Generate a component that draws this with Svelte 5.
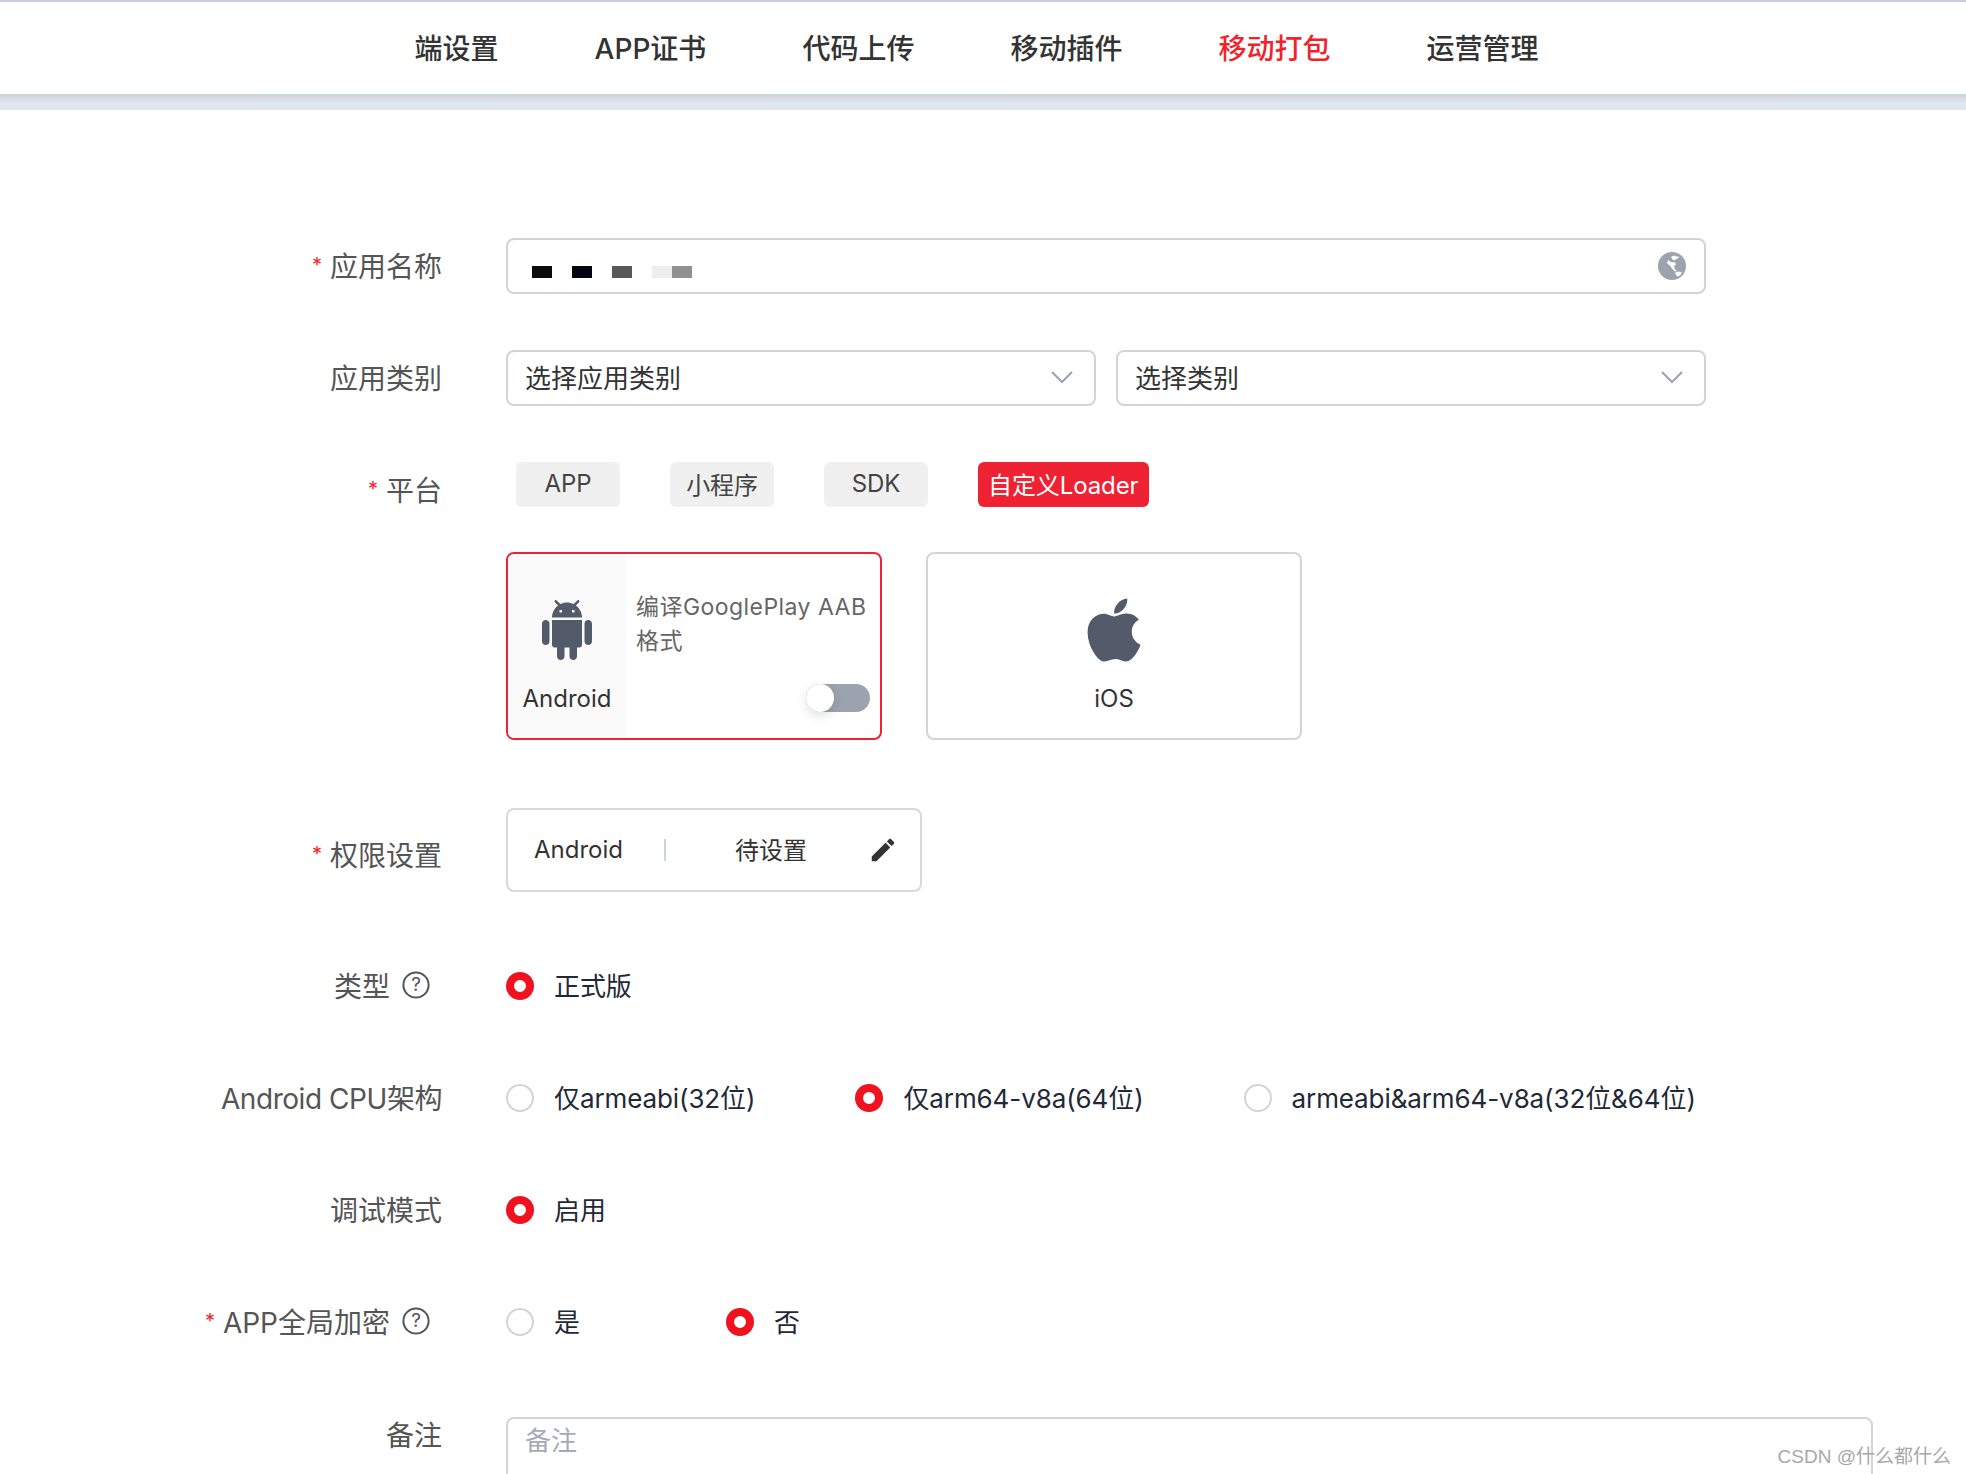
<script>
  const navItems = ['端设置', 'APP证书', '代码上传', '移动插件', '移动打包', '运营管理'];
  const activeNav = '移动打包';
  const platforms = ['APP', '小程序', 'SDK', '自定义Loader'];
  const activePlatform = '自定义Loader';
  const nameBlocks = ['#0b0b12', '#05050f', '#58585c', '#eeeeee', '#909090'];
  const cpuOptions = [
    { label: '仅armeabi(32位)', checked: false },
    { label: '仅arm64-v8a(64位)', checked: true },
    { label: 'armeabi&arm64-v8a(32位&64位)', checked: false }
  ];
</script>

{#snippet radio(label, checked)}
  <label class="radio">
    <span class="dot" class:checked></span>
    <span class="radio-text">{label}</span>
  </label>
{/snippet}

{#snippet help()}
  <svg class="help" viewBox="0 0 28 28" aria-hidden="true">
    <circle cx="14" cy="14" r="12.6" fill="none" stroke="#555" stroke-width="2" />
    <text x="14" y="20" text-anchor="middle">?</text>
  </svg>
{/snippet}

{#snippet chevron()}
  <svg class="chevron" viewBox="0 0 24 14" aria-hidden="true">
    <path d="M2 2l10 10L22 2" fill="none" stroke="#9ca3af" stroke-width="2" />
  </svg>
{/snippet}

<div class="page">
  <nav class="topnav">
    {#each navItems as item}
      <a class:active={item === activeNav} href="#top">{item}</a>
    {/each}
  </nav>
  <div class="shade"></div>

  <form class="form">
    <div class="row">
      <div class="label"><i>*</i>应用名称</div>
      <div class="field box">
        <div class="blocks">
          {#each nameBlocks as color}
            <span style:background={color}></span>
          {/each}
        </div>
        <svg class="globe" viewBox="0 0 28 28" aria-hidden="true">
          <circle cx="14" cy="14" r="14" fill="#9ca3af" />
          <path fill="#fff" d="M13 5l3-1.500 2 1 3 0-1 2-2 .5-1.500 1.500-2-1zM10 8l3 2 4 .5 1 2-2 2 1 3 2 1.500-2 .5-3-3-2-3-3-2zM17 20.500l4-1 3 1-2 3-3 1z" />
        </svg>
      </div>
    </div>

    <div class="row">
      <div class="label">应用类别</div>
      <div class="field selects">
        <div class="box select">选择应用类别{@render chevron()}</div>
        <div class="box select">选择类别{@render chevron()}</div>
      </div>
    </div>

    <div class="row platform">
      <div class="label"><i>*</i>平台</div>
      <div class="field">
        <div class="tabs">
          {#each platforms as p}
            <button type="button" class="tab" class:active={p === activePlatform}>{p}</button>
          {/each}
        </div>
        <div class="cards">
          <div class="card selected">
            <div class="side">
              <svg class="android" viewBox="0 0 24 24" aria-hidden="true">
                <path d="M6 18c0 .55.45 1 1 1h1v3.500c0 .83.67 1.500 1.500 1.500s1.500-.67 1.500-1.500V19h2v3.500c0 .83.67 1.500 1.500 1.500s1.500-.67 1.500-1.500V19h1c.55 0 1-.45 1-1V8H6v10zM3.500 8C2.670 8 2 8.670 2 9.500v7c0 .83.67 1.500 1.500 1.500S5 17.330 5 16.500v-7C5 8.670 4.330 8 3.500 8zm17 0c-.83 0-1.500.67-1.500 1.500v7c0 .83.67 1.500 1.500 1.500s1.500-.67 1.500-1.500v-7c0-.83-.67-1.500-1.500-1.500zm-4.970-5.840l1.300-1.300c.2-.2.2-.51 0-.71-.2-.2-.51-.2-.71 0l-1.480 1.480C13.850 1.230 12.950 1 12 1c-.96 0-1.860.23-2.660.63L7.850.15c-.2-.2-.51-.2-.71 0-.2.2-.2.51 0 .71l1.310 1.310C6.970 3.260 6 5.010 6 7h12c0-1.990-.97-3.750-2.470-4.840zM10 5H9V4h1v1zm5 0h-1V4h1v1z" />
              </svg>
              <span>Android</span>
            </div>
            <div class="detail">
              <p>编译GooglePlay AAB格式</p>
              <span class="switch"><span></span></span>
            </div>
          </div>
          <div class="card ios">
            <svg class="apple" viewBox="0 0 384 512" aria-hidden="true">
              <path d="M318.700 268.700c-.2-36.700 16.400-64.400 50-84.800-18.800-26.900-47.200-41.700-84.700-44.600-35.500-2.800-74.300 20.700-88.500 20.700-15 0-49.400-19.700-76.400-19.700C63.300 141.200 4 184.800 4 273.500q0 39.300 14.400 81.200c12.800 36.700 59 126.700 107.200 125.200 25.200-.6 43-17.900 75.800-17.900 31.800 0 48.300 17.900 76.400 17.900 48.600-.7 90.400-82.500 102.600-119.300-65.200-30.700-61.700-90-61.700-91.900zm-56.600-164.200c27.300-32.400 24.800-61.900 24-72.500-24.100 1.400-52 16.400-67.900 34.900-17.500 19.800-27.800 44.300-25.600 71.900 26.100 2 49.900-11.400 69.500-34.300z" />
            </svg>
            <span>iOS</span>
          </div>
        </div>
      </div>
    </div>

    <div class="row perm">
      <div class="label"><i>*</i>权限设置</div>
      <div class="field">
        <div class="permbox">
          <span class="permname">Android</span>
          <span class="permstate">待设置</span>
          <svg class="pencil" viewBox="0 0 24 24" aria-hidden="true">
            <path d="M3 17.250V21h3.750L17.810 9.940l-3.750-3.750L3 17.250zM20.710 7.040c.39-.39.39-1.020 0-1.410l-2.340-2.340c-.39-.39-1.020-.39-1.410 0l-1.830 1.830 3.750 3.750 1.830-1.830z" />
          </svg>
        </div>
      </div>
    </div>

    <div class="row opt">
      <div class="label with-help">类型{@render help()}</div>
      <div class="field radios">{@render radio('正式版', true)}</div>
    </div>

    <div class="row opt">
      <div class="label cpu">Android CPU架构</div>
      <div class="field radios">
        {#each cpuOptions as o}
          {@render radio(o.label, o.checked)}
        {/each}
      </div>
    </div>

    <div class="row opt">
      <div class="label">调试模式</div>
      <div class="field radios">{@render radio('启用', true)}</div>
    </div>

    <div class="row opt">
      <div class="label with-help"><i>*</i>APP全局加密{@render help()}</div>
      <div class="field radios wide">
        {@render radio('是', false)}
        {@render radio('否', true)}
      </div>
    </div>

    <div class="row notes">
      <div class="label">备注</div>
      <div class="field remark">
        <textarea placeholder="备注"></textarea>
      </div>
    </div>
  </form>

  <div class="watermark">CSDN @什么都什么</div>
</div>

<style>
  :global(body) {
    margin: 0;
    background: #fff;
  }

  .page {
    position: relative;
    height: 1474px;
    overflow: hidden;
    font-family: Inter, "Noto Sans CJK SC", sans-serif;
    color: #333;
  }

  .topnav {
    display: flex;
    justify-content: center;
    gap: 96px;
    height: 94px;
    box-sizing: border-box;
    align-items: center;
    padding: 0 13px 3px 0;
    border-top: 2px solid #c9cdea;
    background: #fff;
  }

  .topnav a {
    font-size: 28px;
    font-weight: 500;
    color: #333;
    text-decoration: none;
  }

  .topnav a.active {
    color: #f0232d;
  }

  .shade {
    height: 16px;
    background: linear-gradient(#cdd2da, #e0e6ee 55%);
  }

  .form {
    padding-top: 128px;
  }

  .row {
    display: flex;
    margin-bottom: 56px;
  }

  .label {
    width: 442px;
    flex: none;
    height: 56px;
    box-sizing: border-box;
    padding-bottom: 2px;
    display: flex;
    align-items: center;
    justify-content: flex-end;
    font-size: 28px;
    color: #555;
  }

  .label i {
    font-style: normal;
    font-size: 20px;
    color: #f5222d;
    margin-right: 8px;
  }

  .label.cpu {
    letter-spacing: -0.45px;
  }

  .with-help {
    padding-right: 12px;
  }

  .help {
    width: 28px;
    height: 28px;
    margin-left: 12px;
  }

  .help text {
    font-size: 19px;
    fill: #555;
  }

  .field {
    margin-left: 64px;
    flex: none;
    width: 1200px;
    box-sizing: border-box;
  }

  .box {
    height: 56px;
    box-sizing: border-box;
    border: 2px solid #d1d5db;
    border-radius: 8px;
    display: flex;
    align-items: center;
    justify-content: space-between;
  }

  .blocks {
    display: flex;
    margin: 12px 0 0 24px;
  }

  .blocks span {
    width: 20px;
    height: 12px;
    margin-right: 20px;
  }

  .blocks span:nth-child(4) {
    margin-right: 0;
  }

  .globe {
    width: 28px;
    height: 28px;
    margin-right: 18px;
  }

  .selects {
    display: flex;
    gap: 20px;
  }

  .select {
    flex: 1;
    padding: 0 20px 3px 17px;
    font-size: 26px;
    color: #333;
  }

  .chevron {
    width: 24px;
    height: 14px;
  }

  .tabs {
    display: flex;
    gap: 50px;
    padding-left: 10px;
    height: 45px;
  }

  .tab {
    min-width: 104px;
    height: 45px;
    padding: 0 10px 2px;
    border: 0;
    border-radius: 6px;
    background: #f0f0f0;
    font: inherit;
    font-size: 24px;
    letter-spacing: -0.1px;
    color: #444;
  }

  .tab.active {
    background: #ee2233;
    color: #fff;
  }

  .cards {
    display: flex;
    gap: 44px;
    margin-top: 45px;
  }

  .card {
    width: 376px;
    height: 188px;
    box-sizing: border-box;
    border: 2px solid #d1d5db;
    border-radius: 8px;
    font-size: 24px;
    color: #333;
  }

  .card.selected {
    display: flex;
    border-color: #ee2233;
    overflow: hidden;
  }

  .side {
    width: 118px;
    flex: none;
    background: #fafafa;
    display: flex;
    flex-direction: column;
    align-items: center;
    padding-top: 46px;
    box-sizing: border-box;
  }

  .android {
    width: 60px;
    height: 60px;
    fill: #535a6a;
  }

  .side span {
    margin-top: 24px;
  }

  .detail {
    flex: 1;
    padding: 36px 10px 0 10px;
    display: flex;
    flex-direction: column;
  }

  .detail p {
    margin: 0;
    font-size: 23px;
    line-height: 34px;
    letter-spacing: 0.45px;
    color: #666;
  }

  .switch {
    align-self: flex-end;
    margin-top: 26px;
    width: 64px;
    height: 28px;
    border-radius: 14px;
    background: #9ca3af;
  }

  .switch span {
    display: block;
    width: 28px;
    height: 28px;
    border-radius: 50%;
    background: #fff;
    box-shadow: 0 4px 12px rgba(0, 0, 0, 0.12);
  }

  .ios {
    display: flex;
    flex-direction: column;
    align-items: center;
    padding-top: 40px;
  }

  .apple {
    width: 54px;
    height: 72px;
    fill: #535a6a;
  }

  .ios span {
    margin-top: 18px;
  }

  .perm {
    margin-top: 68px;
    margin-bottom: 0;
  }

  .perm .label {
    height: 84px;
    padding-top: 10px;
  }

  .permbox {
    width: 416px;
    height: 84px;
    box-sizing: border-box;
    border: 2px solid #d9d9d9;
    border-radius: 8px;
    display: flex;
    align-items: center;
    font-size: 24px;
    color: #333;
    padding-left: 26px;
  }

  .permname {
    width: 130px;
    border-right: 2px solid #cbd5e1;
    line-height: 22px;
  }

  .permstate {
    margin: 0 0 4px 69px;
    flex: 1;
  }

  .pencil {
    width: 30px;
    height: 30px;
    fill: #333;
    margin-right: 22px;
  }

  .perm + .opt {
    margin-top: 66px;
  }

  .radios {
    display: flex;
    align-items: center;
    gap: 100px;
    height: 56px;
  }

  .wide {
    gap: 146px;
  }

  .radio {
    display: flex;
    align-items: center;
    gap: 20px;
    font-size: 26px;
    letter-spacing: -0.1px;
    color: #1f2937;
  }

  .radio-text {
    margin-bottom: 3px;
  }

  .dot {
    width: 28px;
    height: 28px;
    box-sizing: border-box;
    border: 2px solid #d1d5db;
    border-radius: 50%;
    background: #fff;
  }

  .dot.checked {
    border: 8.5px solid #f0121f;
  }

  .notes {
    margin-top: 67px;
  }

  .notes .label {
    height: 36px;
  }

  .remark {
    width: 1367px;
    height: 200px;
  }

  textarea {
    display: block;
    width: 100%;
    height: 100%;
    box-sizing: border-box;
    border: 2px solid #d1d5db;
    border-radius: 8px;
    padding: 1px 17px;
    resize: none;
    font: inherit;
    font-size: 26px;
    outline: none;
  }

  textarea::placeholder {
    color: #a3abb8;
  }

  .watermark {
    position: absolute;
    right: 15px;
    bottom: 6px;
    font-family: "Liberation Sans", "Noto Sans CJK SC", sans-serif;
    font-size: 19px;
    color: #a8a8a8;
  }
</style>
